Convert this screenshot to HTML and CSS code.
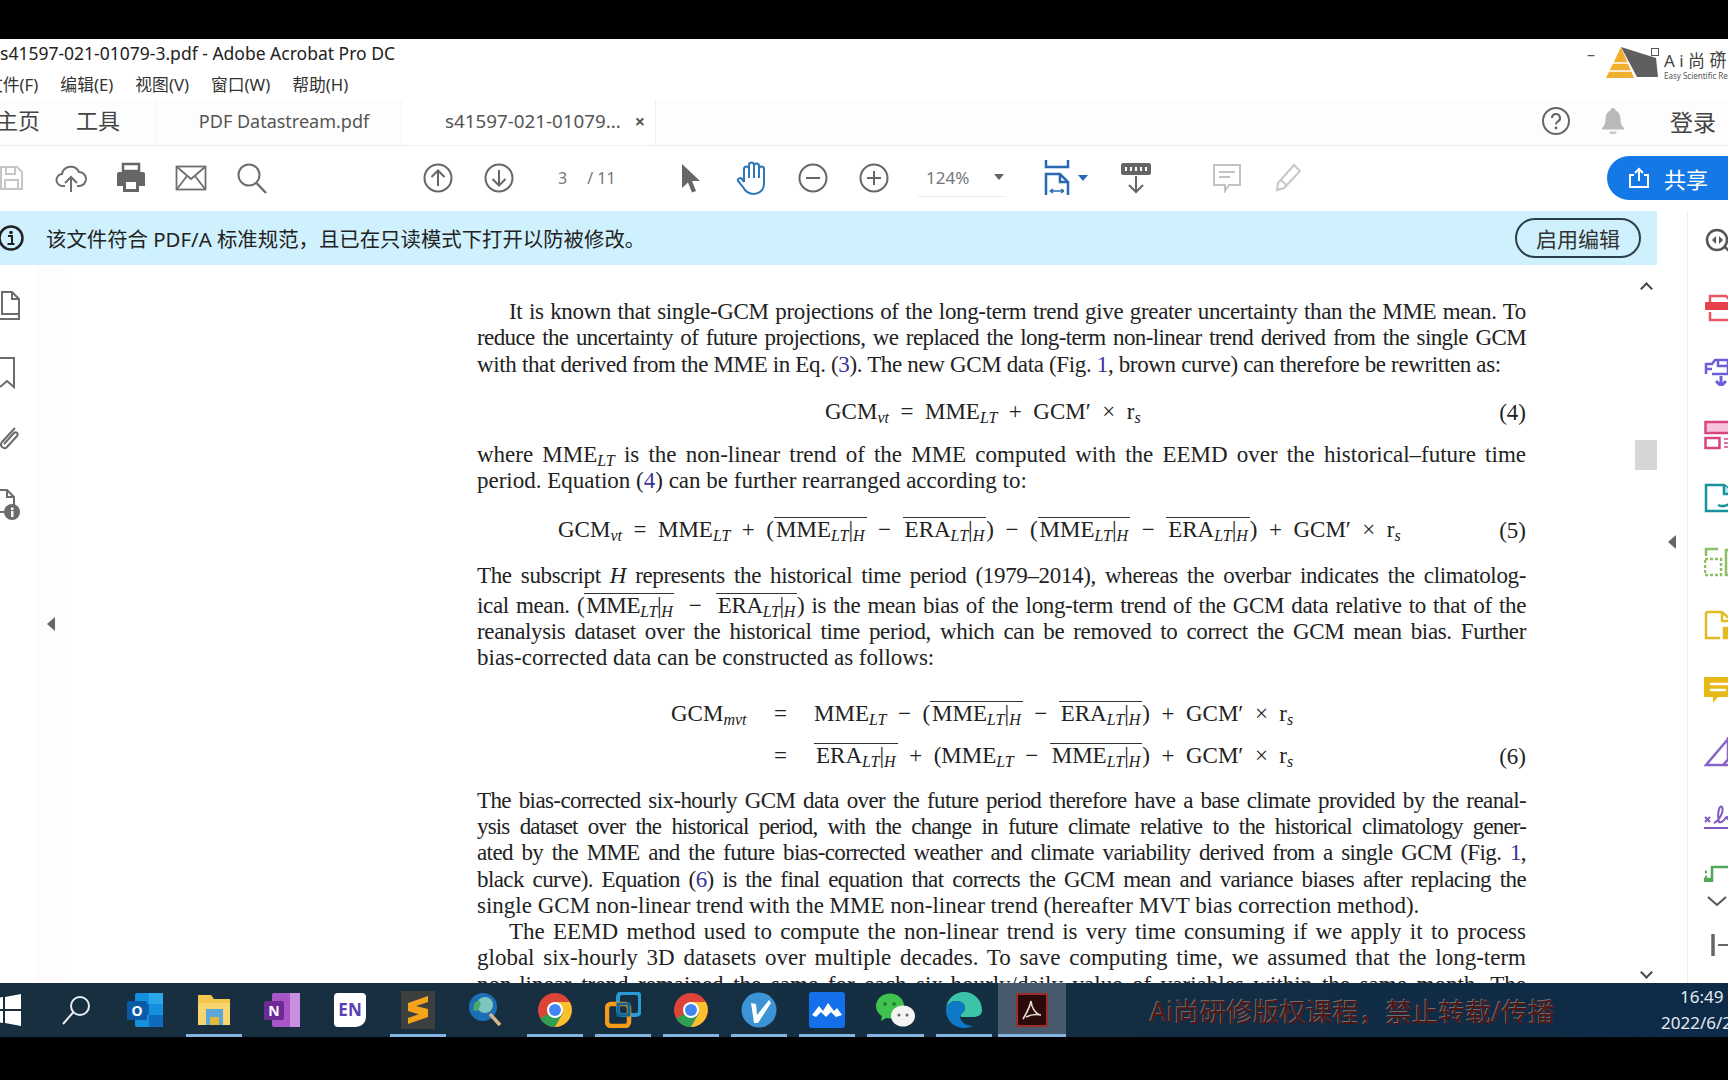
FILE: index.html
```html
<!DOCTYPE html>
<html lang="zh">
<head>
    <meta charset="utf-8">
    <title>s41597-021-01079-3.pdf - Adobe Acrobat Pro DC</title>
    <link rel="stylesheet" href="styles.css">
</head>
<body>
    <svg class="defs" width="0" height="0">
        <symbol id="chrome" viewBox="0 0 36 36">
            <circle cx="18" cy="18" r="17" fill="#db4437"/>
            <path d="M18 18 3.2 26.4A17 17 0 0 0 18 35l8.5-15z" fill="#2f9e52"/>
            <path d="M18 10h14.800A17 17 0 0 1 18 35l8-14z" fill="#fbc02d"/>
            <circle cx="18" cy="18" r="8" fill="#fff"/>
            <circle cx="18" cy="18" r="6" fill="#4285f4"/>
        </symbol>
    </svg>

    <div class="blackbar-top"></div>

    <div class="window">
        <div class="titlebar">
            <span class="title">s41597-021-01079-3.pdf - Adobe Acrobat Pro DC</span>
            <div class="winctl">
                <span class="winbtn">&#8211;</span>
                <span class="winbtn"><i class="restore"></i></span>
                <span class="winbtn">&#215;</span>
            </div>
        </div>

        <div class="menubar">
            <span>文件(F)</span>
            <span>编辑(E)</span>
            <span>视图(V)</span>
            <span>窗口(W)</span>
            <span>帮助(H)</span>
        </div>

        <div class="tabbar">
            <span class="navtab home">主页</span>
            <span class="navtab">工具</span>
            <div class="doctab">PDF Datastream.pdf</div>
            <div class="doctab active">s41597-021-01079... <b class="tabx">&#215;</b></div>
            <div class="account">
                <svg width="30" height="30" viewBox="0 0 30 30"><circle cx="15" cy="15" r="13" fill="none" stroke="#666" stroke-width="2"/><path d="M11 12a4 4 0 1 1 6 3.400c-1.400.8-2 1.400-2 3" fill="none" stroke="#666" stroke-width="2"/><circle cx="15" cy="22" r="1.400" fill="#666"/></svg>
                <svg class="bell" width="28" height="30" viewBox="0 0 28 30"><path d="M14 2c1.500 0 2.500 1 2.500 2.500C20.500 6 21.500 9.500 21.500 14c0 4 1.500 6 3.500 8v1.500H3V22c2-2 3.500-4 3.500-8 0-4.500 1-8 5-9.500C11.500 3 12.500 2 14 2z" fill="#b9b9b9"/><rect x="10.500" y="25.500" width="7" height="2.500" rx="1" fill="#c8c8c8"/></svg>
                <span class="login">登录</span>
            </div>
        </div>

        <div class="toolbar">
            <div class="tool first"><svg width="30" height="30" viewBox="0 0 30 30" fill="none" stroke="#c6c6c6" stroke-width="2"><path d="M5 4h16l5 5v17H5z"/><path d="M10 4v7h9V4M9 26v-9h13v9"/></svg></div>
            <div class="tool"><svg width="32" height="32" viewBox="0 0 32 32" fill="none" stroke="#6e6e6e" stroke-width="2"><path d="M10 24H8a6 6 0 0 1-1-12 9 9 0 0 1 17-2 7 7 0 0 1 0 14h-2"/><path d="M16 30V15M10 21l6-6 6 6"/></svg></div>
            <div class="tool"><svg width="32" height="32" viewBox="0 0 32 32"><path d="M8 2h16v7H8z" fill="none" stroke="#666" stroke-width="2.500"/><path d="M4 10h24a2 2 0 0 1 2 2v12h-6v6H8v-6H2V12a2 2 0 0 1 2-2z" fill="#666"/><rect x="11" y="20" width="10" height="7" fill="#fff"/></svg></div>
            <div class="tool"><svg width="32" height="26" viewBox="0 0 32 26" fill="none" stroke="#6e6e6e" stroke-width="1.800"><rect x="1.500" y="1.500" width="29" height="23"/><path d="M2 2l14 12L30 2M2 24l10-13M30 24 20 11"/></svg></div>
            <div class="tool"><svg width="32" height="32" viewBox="0 0 32 32" fill="none" stroke="#6e6e6e" stroke-width="2"><circle cx="13" cy="13" r="10.500"/><path d="M20.500 21 30 31" stroke-width="2.500"/></svg></div>

            <div class="tool gap-nav"><svg width="30" height="30" viewBox="0 0 30 30" fill="none" stroke="#666" stroke-width="2"><circle cx="15" cy="15" r="13.500"/><path d="M15 23V8M8.500 14 15 7.500 21.500 14"/></svg></div>
            <div class="tool"><svg width="30" height="30" viewBox="0 0 30 30" fill="none" stroke="#666" stroke-width="2"><circle cx="15" cy="15" r="13.500"/><path d="M15 7v15M8.500 16l6.500 6.500 6.500-6.500"/></svg></div>
            <div class="pagenum"><span>3</span><span>/ 11</span></div>

            <div class="tool"><svg width="22" height="30" viewBox="0 0 22 30"><path d="M2 1l18 17h-8l4 10-4 1.500-4-10L2 25z" fill="#666"/></svg></div>
            <div class="tool"><svg width="32" height="36" viewBox="0 0 32 36" fill="none" stroke="#2f78b7" stroke-width="2"><path d="M8 22V9a2.500 2.500 0 0 1 5 0V5a2.500 2.500 0 0 1 5 0v1a2.500 2.500 0 0 1 5 0v3a2.500 2.500 0 0 1 5 0v15c0 6-5 10-10 10-6 0-9-3-11-7l-5-6c-1-2 2-4 4-2l2 3"/><path d="M13 8v10M18 6v12M23 8v10"/></svg></div>
            <div class="tool"><svg width="30" height="30" viewBox="0 0 30 30" fill="none" stroke="#666" stroke-width="2"><circle cx="15" cy="15" r="13.500"/><path d="M8 15h14"/></svg></div>
            <div class="tool"><svg width="30" height="30" viewBox="0 0 30 30" fill="none" stroke="#666" stroke-width="2"><circle cx="15" cy="15" r="13.500"/><path d="M8 15h14M15 8v14"/></svg></div>

            <div class="zoomsel"><span>124%</span><i class="caret"></i></div>

            <div class="tool fit"><svg width="26" height="36" viewBox="0 0 26 36" fill="none" stroke="#2868b4" stroke-width="2.500"><path d="M2 0v7h22V0M2 35V14h14l8 8v13"/><path d="M16 14v8h8"/><path d="M6 31h14M6 31l3-2M6 31l3 2M20 31l-3-2M20 31l-3 2" stroke-width="1.500"/></svg><i class="caret blue"></i></div>
            <div class="tool dl"><svg width="32" height="32" viewBox="0 0 32 32"><rect x="1" y="1" width="30" height="12" rx="2" fill="#666"/><path d="M6 5v4M11 5v4M16 5v4M21 5v4M26 5v4" stroke="#fff" stroke-width="2"/><path d="M16 14v16M9 23l7 7 7-7" fill="none" stroke="#666" stroke-width="2"/></svg></div>
            <div class="tool comment"><svg width="30" height="30" viewBox="0 0 30 30" fill="none" stroke="#c2c2c2" stroke-width="2"><path d="M2 2h26v20H17l-4 6v-6H2z"/><path d="M7 9h16M7 14h11"/></svg></div>
            <div class="tool"><svg width="32" height="32" viewBox="0 0 32 32" fill="none" stroke="#c8c8c8" stroke-width="2"><path d="M6 21 22 3l6 6-16 17-7 2z"/><path d="M9 18l6 6"/></svg></div>

            <button class="share"><svg width="22" height="22" viewBox="0 0 22 22" fill="none" stroke="#fff" stroke-width="2"><path d="M6 8H2v12h18V8h-4M11 14V2M7 6l4-4 4 4"/></svg>共享</button>
        </div>

        <div class="workspace">
            <div class="leftcol">
                <div class="notice">
                    <svg class="infoicon" width="26" height="26" viewBox="0 0 26 26"><circle cx="13" cy="13" r="11.500" fill="none" stroke="#222" stroke-width="2.500"/><circle cx="13" cy="7.500" r="1.800" fill="#222"/><path d="M10 11h4v8h2M9.500 19h7" fill="none" stroke="#222" stroke-width="2"/></svg>
                    <span class="noticetext">该文件符合 PDF/A 标准规范，且已在只读模式下打开以防被修改。</span>
                    <button class="enable">启用编辑</button>
                </div>

                <div class="content">
                    <div class="nav">
                        <svg width="32" height="34" viewBox="0 0 32 34" fill="none" stroke="#6b6b6b" stroke-width="2"><path d="M2 2h10l7 7v15H2zM12 2v7h7"/><path d="M19 24v5H0"/></svg>
                        <svg width="32" height="34" viewBox="0 0 32 34" fill="none" stroke="#6b6b6b" stroke-width="2"><path d="M0 2h14v29l-7-6-7 6"/></svg>
                        <svg width="32" height="34" viewBox="0 0 32 34" fill="none" stroke="#6b6b6b" stroke-width="2"><path d="M15 6 2 20c-3 4 2 8 5 5L17 14c2-2-1-5-3-3L4 22"/></svg>
                        <svg width="32" height="34" viewBox="0 0 32 34"><path d="M0 2h7l7 7v8M0 24h6M7 2v7h7" fill="none" stroke="#6b6b6b" stroke-width="2"/><circle cx="12" cy="24" r="8" fill="#6b6b6b"/><rect x="11" y="23" width="2.500" height="6" fill="#fff"/><rect x="11" y="19.500" width="2.500" height="2.500" fill="#fff"/></svg>
                    </div>
                    <div class="pane"><i class="arrow-left"></i></div>

                    <div class="doc">
                        <div class="ln indent t1">It is known that single-GCM projections of the long-term trend give greater uncertainty than the MME mean. To</div>
                        <div class="ln t2">reduce the uncertainty of future projections, we replaced the long-term non-linear trend derived from the single GCM</div>
                        <div class="ln end t1">with that derived from the MME in Eq. (<a>3</a>). The new GCM data (Fig. <a>1</a>, brown curve) can therefore be rewritten as:</div>

                        <div class="eq eq4">
                            <span class="formula">GCM<sub>vt</sub> &nbsp;=&nbsp; MME<sub>LT</sub> &nbsp;+&nbsp; GCM&#8242; &nbsp;×&nbsp; r<sub>s</sub></span>
                            <span class="eqnum">(4)</span>
                        </div>

                        <div class="ln">where MME<sub>LT</sub> is the non-linear trend of the MME computed with the EEMD over the historical–future time</div>
                        <div class="ln end">period. Equation (<a>4</a>) can be further rearranged according to:</div>

                        <div class="eq eq5">
                            <span class="formula">GCM<sub>vt</sub> &nbsp;=&nbsp; MME<sub>LT</sub> &nbsp;+&nbsp; (<span class="bar">MME<sub>LT</sub>|<sub>H</sub></span> &nbsp;&#8722;&nbsp; <span class="bar">ERA<sub>LT</sub>|<sub>H</sub></span>) &nbsp;&#8722;&nbsp; (<span class="bar">MME<sub>LT</sub>|<sub>H</sub></span> &nbsp;&#8722;&nbsp; <span class="bar">ERA<sub>LT</sub>|<sub>H</sub></span>) &nbsp;+&nbsp; GCM&#8242; &nbsp;×&nbsp; r<sub>s</sub></span>
                            <span class="eqnum">(5)</span>
                        </div>

                        <div class="ln t1">The subscript <i>H</i> represents the historical time period (1979–2014), whereas the overbar indicates the climatolog-</div>
                        <div class="ln mid t1">ical mean. (<span class="bar">MME<sub>LT</sub>|<sub>H</sub></span> &nbsp;&#8722;&nbsp; <span class="bar">ERA<sub>LT</sub>|<sub>H</sub></span>) is the mean bias of the long-term trend of the GCM data relative to that of the</div>
                        <div class="ln t1">reanalysis dataset over the historical time period, which can be removed to correct the GCM mean bias. Further</div>
                        <div class="ln end">bias-corrected data can be constructed as follows:</div>

                        <div class="eqblock">
                            <div class="eqrow">
                                <span class="lhs">GCM<sub>mvt</sub></span><span class="rel">=</span>
                                <span class="formula">MME<sub>LT</sub> &nbsp;&#8722;&nbsp; (<span class="bar">MME<sub>LT</sub>|<sub>H</sub></span> &nbsp;&#8722;&nbsp; <span class="bar">ERA<sub>LT</sub>|<sub>H</sub></span>) &nbsp;+&nbsp; GCM&#8242; &nbsp;×&nbsp; r<sub>s</sub></span>
                            </div>
                            <div class="eqrow second">
                                <span class="lhs"></span><span class="rel">=</span>
                                <span class="formula"><span class="bar">ERA<sub>LT</sub>|<sub>H</sub></span> &nbsp;+&nbsp; (MME<sub>LT</sub> &nbsp;&#8722;&nbsp; <span class="bar">MME<sub>LT</sub>|<sub>H</sub></span>) &nbsp;+&nbsp; GCM&#8242; &nbsp;×&nbsp; r<sub>s</sub></span>
                                <span class="eqnum">(6)</span>
                            </div>
                        </div>

                        <div class="ln t2">The bias-corrected six-hourly GCM data over the future period therefore have a base climate provided by the reanal-</div>
                        <div class="ln t3">ysis dataset over the historical period, with the change in future climate relative to the historical climatology gener-</div>
                        <div class="ln t2">ated by the MME and the future bias-corrected weather and climate variability derived from a single GCM (Fig. <a>1</a>,</div>
                        <div class="ln t2">black curve). Equation (<a>6</a>) is the final equation that corrects the GCM mean and variance biases after replacing the</div>
                        <div class="ln end">single GCM non-linear trend with the MME non-linear trend (hereafter MVT bias correction method).</div>
                        <div class="ln indent">The EEMD method used to compute the non-linear trend is very time consuming if we apply it to process</div>
                        <div class="ln">global six-hourly 3D datasets over multiple decades. To save computing time, we assumed that the long-term</div>
                        <div class="ln">non-linear trend remained the same for each six-hourly/daily value of variables within the same month. The</div>
                    </div>

                    <div class="scrollbar">
                        <i class="chev up"></i>
                        <div class="thumb"></div>
                        <i class="chev down"></i>
                    </div>
                </div>
            </div>

            <div class="collapse"><i class="arrow-left"></i></div>

            <div class="rightpane">
                <svg class="rp-top" width="34" height="26" viewBox="0 0 34 26" fill="none" stroke="#555" stroke-width="2.500"><circle cx="13" cy="13" r="10"/><path d="M12 9l-4 4 4 4zM15 9l4 4-4 4z" fill="#555" stroke="none"/><path d="M21 20l5 5"/></svg>
                <svg width="34" height="30" viewBox="0 0 34 30" fill="none" stroke="#e8565f" stroke-width="2.500"><path d="M6 9V3h16l8 8v16H6v-8"/><rect x="1" y="9" width="24" height="8" rx="1" fill="#e8404a" stroke="none"/></svg>
                <svg width="34" height="30" viewBox="0 0 34 30" fill="none" stroke="#6a5fd8" stroke-width="2.500"><path d="M2 18V8h6l3-4h13v14H8"/><path d="M14 4v6h10M2 13h6"/><path d="M17 20v9M12 25l5 5 5-5" stroke-width="3"/></svg>
                <svg width="34" height="30" viewBox="0 0 34 30" fill="none" stroke="#d9457f" stroke-width="2.500"><rect x="1.500" y="2" width="32" height="11" fill="#f7c3dc"/><rect x="1.500" y="18" width="14" height="10"/><path d="M20 19h14M20 23h14M20 27h14" stroke-width="1.500"/></svg>
                <svg width="34" height="30" viewBox="0 0 34 30" fill="none" stroke="#15929a" stroke-width="2.500"><path d="M2 2h18l10 8v18H2z"/><path d="M20 2v9h10" fill="#bfe9ee"/><path d="M14 22c4 2 8 2 14-3"/></svg>
                <svg width="34" height="30" viewBox="0 0 34 30" fill="none" stroke="#8cc063" stroke-width="2.500"><path d="M1 12h16v16H1z" stroke-dasharray="3 2"/><path d="M2 9V2h12M22 3h12v25H22z"/></svg>
                <svg width="34" height="30" viewBox="0 0 34 30" fill="none" stroke="#e2bb21" stroke-width="2.500"><path d="M2 2h16l10 9v4M16 28H2V2M18 2v9h10"/><rect x="20" y="18" width="14" height="10" fill="#e2bb21"/></svg>
                <svg width="34" height="30" viewBox="0 0 34 30"><path d="M0 3h34v20H14l-5 6v-6H0z" fill="#e6b917"/><path d="M6 10h24M6 16h16" stroke="#fff" stroke-width="2.500"/></svg>
                <svg width="34" height="30" viewBox="0 0 34 30" fill="none" stroke="#8a63c8" stroke-width="2.500"><path d="M2 28 24 2l10 10-15 16zM2 28h30"/><path d="M24 2l10 10-10 10z" fill="#e3d4f5"/></svg>
                <svg width="34" height="30" viewBox="0 0 34 30" fill="none" stroke="#8158c8" stroke-width="2"><path d="M1 16l5 5M6 16l-5 5"/><path d="M10 22c6-3 10-12 8-16-3-3-5 8-3 15 4 2 7-6 8-5 0 3 3 3 5 1"/><path d="M0 27h34"/></svg>
                <svg class="rp-last" width="34" height="18" viewBox="0 0 34 18" fill="none" stroke="#4fa957" stroke-width="2.500"><path d="M8 18V3h18l8 8v7"/><path d="M1 8h3M1 13h3" stroke-dasharray="2 2"/><rect x="0" y="15" width="6" height="3" fill="#4fa957"/></svg>
                <svg class="rp-more" width="22" height="12" viewBox="0 0 22 12" fill="none" stroke="#555" stroke-width="2"><path d="M2 2l9 8 9-8"/></svg>
                <svg class="rp-expand" width="34" height="26" viewBox="0 0 34 26" fill="none" stroke="#666" stroke-width="2"><path d="M3 2v22" stroke-width="3.500"/><path d="M8 13h22"/></svg>
            </div>
        </div>
    </div>

    <div class="taskbar">
        <div class="slot first"><svg width="36" height="32" viewBox="0 0 36 32" fill="#fff"><path d="M0 5l12-2v12H0zM14 3l16-3v15H14zM0 17h12v12L0 27zM14 17h16v15l-16-3z"/></svg></div>
        <div class="slot"><svg width="32" height="32" viewBox="0 0 32 32" fill="none" stroke="#e8eef2" stroke-width="2"><circle cx="19" cy="12" r="9"/><path d="M12.500 18 2 30"/></svg></div>
        <div class="slot"><svg width="36" height="36" viewBox="0 0 36 36"><rect x="8" y="1" width="28" height="34" rx="2" fill="#1490df"/><rect x="22" y="1" width="14" height="11" fill="#28a8ea"/><rect x="8" y="12" width="14" height="11" fill="#0364b8"/><rect x="22" y="23" width="14" height="12" fill="#0f6cbd"/><rect x="0" y="9" width="20" height="19" rx="2" fill="#0a5aa8"/><text x="10" y="24" class="ico-letter">O</text></svg></div>
        <div class="slot on"><svg width="36" height="34" viewBox="0 0 36 34"><path d="M2 2h13l3 4h16v26H2z" fill="#f4c64b"/><rect x="2" y="10" width="32" height="22" fill="#f7d56f"/><rect x="10" y="16" width="17" height="16" fill="#5aa7dc"/><rect x="14" y="24" width="9" height="8" fill="#e6b93c"/></svg></div>
        <div class="slot"><svg width="36" height="36" viewBox="0 0 36 36"><rect x="8" y="1" width="28" height="34" rx="2" fill="#a855c7"/><rect x="26" y="1" width="10" height="34" fill="#c78fe0"/><rect x="0" y="9" width="20" height="19" rx="2" fill="#6d2a97"/><text x="10" y="24" class="ico-letter">N</text></svg></div>
        <div class="slot"><div class="en">EN</div></div>
        <div class="slot on"><div class="sublime"><svg width="24" height="32" viewBox="0 0 24 32"><path d="M22 2 2 9v8l20 6v-8L10 12l12-4zM2 30l20-7v-6L2 24z" fill="#f6a31c"/></svg></div></div>
        <div class="slot"><svg width="36" height="36" viewBox="0 0 36 36"><circle cx="15" cy="15" r="14" fill="#1c6fb5"/><circle cx="17" cy="13" r="8" fill="#7cc5c0"/><path d="M6 12c4-6 8-3 6 2s-3 6-7 4z" fill="#49a86a"/><path d="M22 22l10 11" stroke="#d8b48a" stroke-width="3.500"/></svg></div>
        <div class="slot on"><svg width="36" height="36"><use href="#chrome"/></svg></div>
        <div class="slot on"><svg width="36" height="36" viewBox="0 0 36 36" fill="none"><rect x="13" y="1" width="22" height="22" rx="4" stroke="#2a9ad6" stroke-width="4"/><rect x="2" y="12" width="22" height="22" rx="4" stroke="#f59c1a" stroke-width="4.500"/><rect x="13" y="12" width="11" height="11" stroke="#14648f" stroke-width="3"/></svg></div>
        <div class="slot on"><svg width="36" height="36"><use href="#chrome"/></svg></div>
        <div class="slot on"><svg width="36" height="36" viewBox="0 0 36 36"><circle cx="18" cy="18" r="17.500" fill="#3c93d6"/><path d="M10 11l5 1 1 11L28 8l2 3-13 20h-4z" fill="#fff"/></svg></div>
        <div class="slot on"><svg width="36" height="36" viewBox="0 0 36 36"><rect width="36" height="36" rx="3" fill="#1470ea"/><path d="M3 23l7-9 4 5 5-8 6 8 3-3 5 7-6 2-5-5-5 5-5-5-5 5z" fill="#fff"/></svg></div>
        <div class="slot on"><svg width="40" height="36" viewBox="0 0 40 36"><ellipse cx="14" cy="14" rx="14" ry="12.500" fill="#3fc24f"/><path d="M6 23l-1 6 7-4z" fill="#3fc24f"/><ellipse cx="27" cy="24" rx="12" ry="10.500" fill="#f2f5f2"/><circle cx="23" cy="23" r="1.500" fill="#666"/><circle cx="31" cy="23" r="1.500" fill="#666"/><circle cx="9" cy="12" r="1.800" fill="#1a7a2b"/><circle cx="18" cy="12" r="1.800" fill="#1a7a2b"/></svg></div>
        <div class="slot on"><svg width="38" height="38" viewBox="0 0 38 38"><path d="M19 1a18 18 0 0 1 18 18c0 5-4 7-9 7H17c-2 0-2-2-1-3 2-2 4-3 4-6 0-4-4-7-8-7-5 0-11 3-11 9C1 9 9 1 19 1z" fill="#3cc4a8"/><path d="M1 19c0-6 6-9 11-9 4 0 8 3 8 7 0 3-2 4-4 6-3 4 2 12 12 12a18 18 0 0 1-9 2C9 37 1 29 1 19z" fill="#0f79c8"/></svg></div>
        <div class="slot active on"><div class="acro"><svg width="24" height="24" viewBox="0 0 24 24" fill="none" stroke="#e8dcd4" stroke-width="1.600"><path d="M3 21c3-5 7-12 8-18 .5 6 4 13 10 14-5-1-11 0-15 2"/></svg></div></div>
        <span class="watermark">Ai尚研修版权课程，禁止转载/传播</span>
        <div class="clock"><span class="time">16:49</span><span>2022/6/24</span></div>
    </div>

    <div class="blackbar-bottom"></div>

    <div class="logo">
        <svg width="52" height="34" viewBox="0 0 52 34"><path d="M15 1 50 12 52 31H31z" fill="#5f5f5f"/><path d="M15 1 28 32H0z" fill="#f2ae2e"/><path d="M7 17h16M3 25h23" stroke="#fff" stroke-width="1.500"/></svg>
        <div class="logotext"><span class="logoname">A i 尚 研</span><span class="logosub">Easy Scientific Research</span></div>
    </div>
</body>
</html>
```

FILE: styles.css
```css
*{
    box-sizing: border-box;
}
html, body{
    margin: 0;
    height: 100%;
}
body{
    width: 1728px;
    height: 1080px;
    overflow: hidden;
    background-color: #000;
    font-family: "Noto Sans", "Noto Sans CJK SC", sans-serif;
    color: #333;
    display: flex;
    flex-direction: column;
    position: relative;
}
.defs{
    position: absolute;
}
.blackbar-top{
    height: 39px;
    flex: none;
}
.blackbar-bottom{
    flex: 1;
}
.window{
    height: 944px;
    flex: none;
    background-color: #fff;
    display: flex;
    flex-direction: column;
    overflow: hidden;
}

/* title + menu */
.titlebar{
    height: 29px;
    flex: none;
    display: flex;
    align-items: center;
    justify-content: space-between;
}
.title{
    font-size: 17.500px;
    color: #222;
    margin-top: -1px;
}
.winctl{
    display: flex;
    margin-right: -23px;
}
.winbtn{
    width: 64px;
    display: flex;
    align-items: center;
    justify-content: center;
    font-size: 16px;
    color: #555;
}
.restore{
    width: 8px;
    height: 8px;
    margin-bottom: 3px;
    border: 1px solid #555;
}
.menubar{
    height: 32px;
    flex: none;
    display: flex;
    align-items: center;
    gap: 22px;
    margin-left: -14px;
    font-size: 16.800px;
    color: #333;
}

/* tabs */
.tabbar{
    height: 46px;
    flex: none;
    display: flex;
    align-items: center;
    background-color: #fdfdfd;
    border-bottom: 1px solid #f0f0f0;
}
.navtab{
    font-size: 22px;
    color: #444;
    margin-right: 36px;
    margin-bottom: 8px;
}
.navtab.home{
    margin-left: -4px;
}
.doctab{
    height: 100%;
    width: 245px;
    display: flex;
    align-items: center;
    justify-content: center;
    font-size: 18px;
    color: #555;
    border-left: 1px solid #f5f5f5;
    padding-bottom: 4px;
    padding-left: 10px;
}
.doctab.active{
    width: 255px;
    background-color: #fff;
    border-right: 1px solid #f0f0f0;
    padding-left: 33px;
    font-size: 18.800px;
}
.tabx{
    margin-left: 14px;
    font-size: 18px;
    color: #555;
}
.account{
    margin-left: auto;
    display: flex;
    align-items: center;
    padding: 0 12px 4px 0;
}
.bell{
    margin-left: 28px;
}
.login{
    margin-left: 43px;
    font-size: 23px;
    color: #444;
}

/* toolbar */
.toolbar{
    height: 65px;
    flex: none;
    display: flex;
    align-items: center;
    padding-bottom: 2px;
}
.tool{
    width: 61px;
    flex: none;
    display: flex;
    align-items: center;
    justify-content: center;
}
.tool.first{
    margin-left: -20px;
    margin-right: -1px;
}
.tool.first + .tool, .tool.first + .tool + .tool{
    margin-right: -1px;
}
.tool.gap-nav{
    margin-left: 125px;
}
.pagenum{
    width: 131px;
    flex: none;
    display: flex;
    gap: 20px;
    padding-left: 29px;
    font-size: 16px;
    color: #777;
}
.zoomsel{
    width: 88px;
    height: 38px;
    margin-left: 14px;
    flex: none;
    display: flex;
    align-items: center;
    justify-content: space-between;
    padding: 0 2px 0 8px;
    font-size: 17px;
    color: #777;
    border-bottom: 1px solid #eee;
}
.caret{
    width: 0;
    height: 0;
    border-left: 5px solid transparent;
    border-right: 5px solid transparent;
    border-top: 6px solid #666;
}
.caret.blue{
    border-top-color: #2868b4;
    margin-left: 8px;
}
.tool.fit{
    margin-left: 20px;
    width: 72px;
    padding-left: 7px;
}
.tool.dl{
    margin-left: 7px;
}
.tool.comment{
    margin-left: 30px;
}
.share{
    margin-left: auto;
    width: 122px;
    height: 44px;
    border: none;
    border-radius: 22px 0 0 22px;
    background-color: #1479e6;
    color: #fff;
    font-family: inherit;
    font-size: 22px;
    display: flex;
    align-items: center;
    justify-content: center;
    gap: 14px;
    margin-right: -1px;
}

/* main area */
.workspace{
    flex: 1;
    min-height: 0;
    display: flex;
}
.leftcol{
    width: 1657px;
    flex: none;
    display: flex;
    flex-direction: column;
}
.notice{
    height: 54px;
    flex: none;
    display: flex;
    align-items: center;
    background-color: #cff0fd;
    padding-right: 16px;
}
.infoicon{
    margin-left: -2px;
}
.noticetext{
    margin-left: 22px;
    font-size: 20.400px;
    color: #222;
}
.enable{
    margin-left: auto;
    width: 126px;
    height: 40px;
    border: 2px solid #2c3e4a;
    border-radius: 20px;
    background: transparent;
    font-family: inherit;
    font-size: 21px;
    color: #333;
    padding: 0;
}
.content{
    flex: 1;
    min-height: 0;
    display: flex;
    overflow: hidden;
}
.nav{
    width: 36px;
    flex: none;
    display: flex;
    flex-direction: column;
    gap: 32px;
    padding-top: 25px;
}
.nav svg{
    flex: none;
}
.pane{
    width: 30px;
    flex: none;
    background-color: #fefcfc;
    display: flex;
    align-items: center;
    justify-content: center;
}
.arrow-left{
    width: 0;
    height: 0;
    border-top: 7px solid transparent;
    border-bottom: 7px solid transparent;
    border-right: 8px solid #666;
}

/* pdf page */
.doc{
    width: 1569px;
    flex: none;
    padding: 34px 109px 0 411px;
    font-family: "Liberation Serif", "Times New Roman", serif;
    font-size: 23px;
    color: #222;
}
.doc a{
    color: #34349a;
}
.doc sub{
    font-size: 16px;
    font-style: italic;
    line-height: 0;
    vertical-align: -4px;
}
.ln{
    height: 26.300px;
    line-height: 26.300px;
    white-space: nowrap;
    text-align: justify;
    text-align-last: justify;
}
.ln.end{
    text-align-last: left;
}
.ln.indent{
    padding-left: 32px;
}
.ln.mid{
    margin-top: 3px;
}
.t1{
    letter-spacing: -0.350px;
}
.t2{
    letter-spacing: -0.600px;
}
.t3{
    letter-spacing: -0.850px;
}
.bar{
    display: inline-block;
    border-top: 1.500px solid #333;
    line-height: 23px;
    padding: 0 2px;
    text-align-last: auto;
}
.eq{
    display: flex;
    justify-content: space-between;
    align-items: center;
    white-space: nowrap;
}
.eq4{
    height: 48px;
    margin: 10px 0 6px;
    padding-left: 348px;
}
.eq5{
    height: 50px;
    margin: 11px 0 8px;
    padding-left: 81px;
}
.eqnum{
    margin-top: 2px;
    margin-left: auto;
}
.eqblock{
    margin: 21px 0 11px;
}
.eqrow{
    display: flex;
    align-items: center;
    height: 42px;
    white-space: nowrap;
    padding-left: 194px;
}
.lhs{
    width: 103px;
    flex: none;
}
.rel{
    width: 40px;
    flex: none;
}
.scrollbar{
    width: 22px;
    flex: none;
    display: flex;
    flex-direction: column;
    align-items: center;
    padding: 19px 0 6px;
}
.chev{
    width: 9px;
    height: 9px;
    border-left: 2px solid #444;
    border-top: 2px solid #444;
}
.chev.up{
    transform: rotate(45deg);
}
.chev.down{
    transform: rotate(225deg);
    margin-top: auto;
}
.thumb{
    width: 22px;
    height: 30px;
    margin-top: 147px;
    background-color: #d6d6d6;
}

/* right side */
.collapse{
    width: 31px;
    flex: none;
    display: flex;
    align-items: center;
    justify-content: center;
    border-right: 1px solid #ececec;
    padding-bottom: 110px;
}
.rightpane{
    flex: 1;
    padding: 16px 0 0 16px;
    display: flex;
    flex-direction: column;
    gap: 33.500px;
    overflow: hidden;
}
.rightpane svg{
    flex: none;
}
.rp-top{
    margin-bottom: 6px;
}
.rp-last{
    margin-bottom: -21px;
}
.rp-more{
    margin-left: 2px;
    margin-bottom: -8px;
}
.rp-expand{
    margin-left: 6px;
}

/* windows taskbar */
.taskbar{
    height: 54px;
    flex: none;
    display: flex;
    align-items: center;
    background: linear-gradient(90deg, #182f3f 0%, #142e42 60%, #0d2a48 100%);
}
.slot{
    width: 68.200px;
    height: 100%;
    flex: none;
    display: flex;
    align-items: center;
    justify-content: center;
    position: relative;
}
.slot.first{
    margin-left: -25px;
}
.slot.on::after{
    content: "";
    position: absolute;
    left: 6px;
    right: 6px;
    bottom: 0;
    height: 3px;
    background-color: #83b4e2;
}
.slot.active{
    background-color: #47596a;
}
.slot.active::after{
    left: 0;
    right: 0;
}
.ico-letter{
    font-size: 14px;
    font-weight: 700;
    fill: #fff;
    text-anchor: middle;
    font-family: "Noto Sans", sans-serif;
}
.en{
    width: 32px;
    height: 34px;
    background-color: #fff;
    border-radius: 4px 4px 10px 4px;
    color: #5b3fb5;
    font-size: 17px;
    font-weight: 700;
    text-align: center;
    line-height: 34px;
}
.sublime{
    width: 34px;
    height: 38px;
    background-color: #3d3f3f;
    display: flex;
    align-items: center;
    justify-content: center;
}
.acro{
    width: 32px;
    height: 34px;
    background-color: #2b0a0a;
    border: 2px solid #9c2f2a;
    display: flex;
    align-items: center;
    justify-content: center;
}
.watermark{
    margin-left: 84px;
    font-size: 26.500px;
    white-space: nowrap;
    color: #4e1616;
    text-shadow: -1px -1px 0 #6e6e6e;
}
.clock{
    margin-left: auto;
    width: 67px;
    flex: none;
    display: flex;
    flex-direction: column;
    gap: 4px;
    font-size: 17px;
    line-height: 22px;
    color: #e4ecf1;
    white-space: nowrap;
}
.clock .time{
    padding-left: 19px;
}

/* watermark logo over the title bar */
.logo{
    position: absolute;
    left: 1606px;
    top: 46px;
    display: flex;
    gap: 6px;
    white-space: nowrap;
}
.logotext{
    display: flex;
    flex-direction: column;
    margin-top: 5px;
}
.logoname{
    font-size: 17px;
    line-height: 20px;
    color: #444;
}
.logosub{
    font-size: 8px;
    line-height: 9px;
    color: #555;
}
```
